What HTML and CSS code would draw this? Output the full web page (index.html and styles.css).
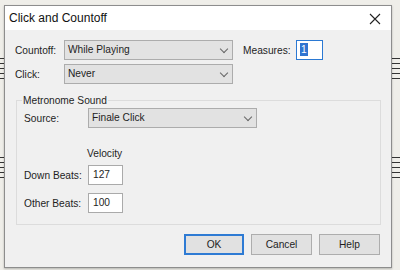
FILE: index.html
```html
<!DOCTYPE html>
<html lang="en">
    <head>
        <meta charset="UTF-8" />
        <title>Click and Countoff</title>
        <link rel="stylesheet" href="styles.css">
    </head>
    <body>
        <div class="staff staff-left staff-top"></div>
        <div class="staff staff-left staff-bottom"></div>
        <div class="staff staff-right staff-top"></div>
        <div class="staff staff-right staff-bottom"></div>

        <div class="dialog">
            <div class="titlebar">
                <span class="title">Click and Countoff</span>
                <svg class="close" width="12" height="12" viewBox="0 0 12 12">
                    <path d="M1 1 L11 11 M11 1 L1 11" stroke="#222" stroke-width="1.1" fill="none" />
                </svg>
            </div>

            <div class="content">
                <div class="row">
                    <label class="lbl lbl-top">Countoff:</label>
                    <div class="select sel-top">While Playing<span class="chev"></span></div>
                    <label class="lbl lbl-measures">Measures:</label>
                    <div class="input input-focus"><span class="sel-text">1</span></div>
                </div>
                <div class="row">
                    <label class="lbl lbl-top">Click:</label>
                    <div class="select sel-top">Never<span class="chev"></span></div>
                </div>

                <fieldset class="group">
                    <legend>Metronome Sound</legend>
                    <div class="row">
                        <label class="lbl lbl-group">Source:</label>
                        <div class="select sel-source">Finale Click<span class="chev"></span></div>
                    </div>
                    <div class="velocity">Velocity</div>
                    <div class="row">
                        <label class="lbl lbl-group">Down Beats:</label>
                        <div class="input input-num">127</div>
                    </div>
                    <div class="row">
                        <label class="lbl lbl-group">Other Beats:</label>
                        <div class="input input-num">100</div>
                    </div>
                </fieldset>

                <div class="buttons">
                    <button class="btn btn-default">OK</button>
                    <button class="btn">Cancel</button>
                    <button class="btn">Help</button>
                </div>
            </div>
        </div>
    </body>
</html>
```

FILE: styles.css
```css
body {
    margin: 0;
    width: 400px;
    height: 270px;
    background-color: #efeee9;
    font-family: "Liberation Sans", Arial, sans-serif;
    font-size: 10.2px;
    color: #1e1e1e;
    position: relative;
    overflow: hidden;
}

/* music staff peeking out behind the dialog */
.staff {
    position: absolute;
    height: 21px;
    background: repeating-linear-gradient(#333 0 1px, transparent 1px 5px);
}
.staff-left {
    left: 0;
    width: 6px;
}
.staff-right {
    right: 0;
    width: 10px;
}
.staff-top {
    top: 58px;
}
.staff-bottom {
    top: 157px;
}

.dialog {
    position: relative;
    margin: 5px 0 0 4px;
    width: 386px;
    height: 261px;
    border: 1px solid #8d8d8d;
    background-color: #f0f0f0;
    box-shadow: 0 1px 2px rgba(0, 0, 0, 0.25);
}

.titlebar {
    height: 24px;
    background-color: #fff;
    display: flex;
    align-items: center;
    justify-content: space-between;
    padding: 0 10px 0 4px;
}
.title {
    font-family: "Liberation Sans", Arial, sans-serif;
    font-size: 12px;
    color: #111;
}
.close {
    display: block;
    margin-top: 2px;
}

.content {
    padding: 10px 0 0 10px;
}

.row {
    display: flex;
    align-items: center;
    margin-bottom: 4px;
}

.lbl {
    flex: none;
}
.lbl-top {
    width: 49px;
}
.lbl-measures {
    margin-left: 10px;
    width: 53px;
}
.lbl-group {
    width: 64px;
}

.select {
    position: relative;
    height: 18px;
    line-height: 18px;
    padding-left: 3px;
    border: 1px solid #acacac;
    background-color: #e2e2e2;
    box-sizing: content-box;
}
.sel-top {
    width: 164px;
}
.sel-source {
    width: 164px;
}
.chev {
    position: absolute;
    right: 5px;
    top: 5px;
    width: 5px;
    height: 5px;
    border-right: 1px solid #666;
    border-bottom: 1px solid #666;
    transform: rotate(45deg);
}

.input {
    height: 18px;
    line-height: 18px;
    border: 1px solid #aaa;
    background-color: #fff;
    box-sizing: content-box;
}
.input-focus {
    width: 22px;
    border-color: #2b79d3;
    padding-left: 3px;
}
.sel-text {
    display: inline-block;
    background-color: #3074d1;
    color: #fff;
    line-height: 13px;
    padding: 0 1px;
}
.input-num {
    width: 29px;
    padding-left: 4px;
}

.group {
    margin: 11px 0 0 1px;
    width: 356px;
    height: 126px;
    border: 1px solid #dcdcdc;
    padding: 2px 0 0 7px;
    box-sizing: content-box;
}
.group legend {
    padding: 0 1px;
    margin-left: -2px;
}
.group .row {
    margin-bottom: 8px;
}
.velocity {
    margin: 20px 0 6px 63px;
}

.buttons {
    display: flex;
    justify-content: flex-end;
    gap: 7px;
    margin: 9px 11px 0 0;
}
.btn {
    font-family: inherit;
    font-size: 10.2px;
    color: #1e1e1e;
    width: 61px;
    height: 21px;
    border: 1px solid #adadad;
    background-color: #e1e1e1;
    padding: 0;
}
.btn-default {
    border: 2px solid #2e7bd4;
    width: 60px;
}
```
